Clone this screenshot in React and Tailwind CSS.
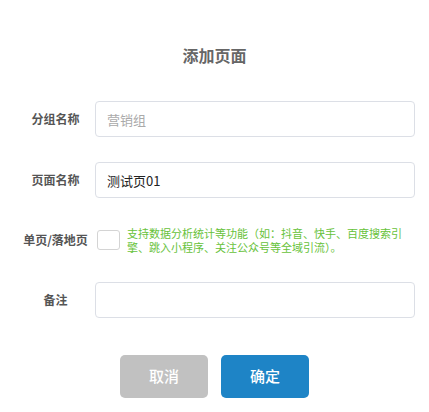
import React from "react";

const font = { fontFamily: '"Noto Sans CJK SC", "Noto Sans", sans-serif' };

function Label({ children }) {
  return (
    <div className="ml-[16px] w-[79px] shrink-0 text-center text-[12px] font-bold text-[#555]">
      {children}
    </div>
  );
}

export default function App() {
  return (
    <div className="w-[429px] h-[412px] bg-white font-['Noto_Sans_CJK_SC',sans-serif]" style={font}>
      <div className="pt-[43px]">
        <div className="h-[24px] text-center text-[16px] font-bold leading-[24px] text-[#666]">添加页面</div>

        <div className="mt-[34px] flex h-[36px] items-center">
          <Label>分组名称</Label>
          <input
            className="h-[36px] w-[320px] rounded-[4px] border border-[#dcdfe6] px-[11px] text-[13px] text-[#333] outline-none placeholder:text-[#aaa]"
            placeholder="营销组"
            style={font}
          />
        </div>

        <div className="mt-[25px] flex h-[36px] items-center">
          <Label>页面名称</Label>
          <input
            className="h-[36px] w-[320px] rounded-[4px] border border-[#dcdfe6] px-[11px] text-[13px] text-[#222] outline-none"
            defaultValue="测试页01"
            style={font}
          />
        </div>

        <div className="mt-[24px] flex h-[36px] items-center">
          <Label>单页/落地页</Label>
          <div className="ml-[2px] h-[20px] w-[23px] shrink-0 rounded-[3px] border border-[#d4d4d4] bg-white" />
          <div className="ml-[7px] w-[278px] text-[11px] leading-[14px] text-[#67c23a]">
            支持数据分析统计等功能（如：抖音、快手、百度搜索引擎、跳入小程序、关注公众号等全域引流）。
          </div>
        </div>

        <div className="mt-[24px] flex h-[36px] items-center">
          <Label>备注</Label>
          <input
            className="h-[36px] w-[320px] rounded-[4px] border border-[#dcdfe6] px-[11px] text-[13px] text-[#333] outline-none"
            style={font}
          />
        </div>

        <div className="mt-[37px] flex justify-center gap-[13px]">
          <button className="h-[43px] w-[88px] rounded-[5px] bg-[#c1c1c1] text-[15px] font-medium text-white" style={font}>
            取消
          </button>
          <button className="h-[43px] w-[88px] rounded-[5px] bg-[#1e84c6] text-[15px] font-medium text-white" style={font}>
            确定
          </button>
        </div>
      </div>
    </div>
  );
}
